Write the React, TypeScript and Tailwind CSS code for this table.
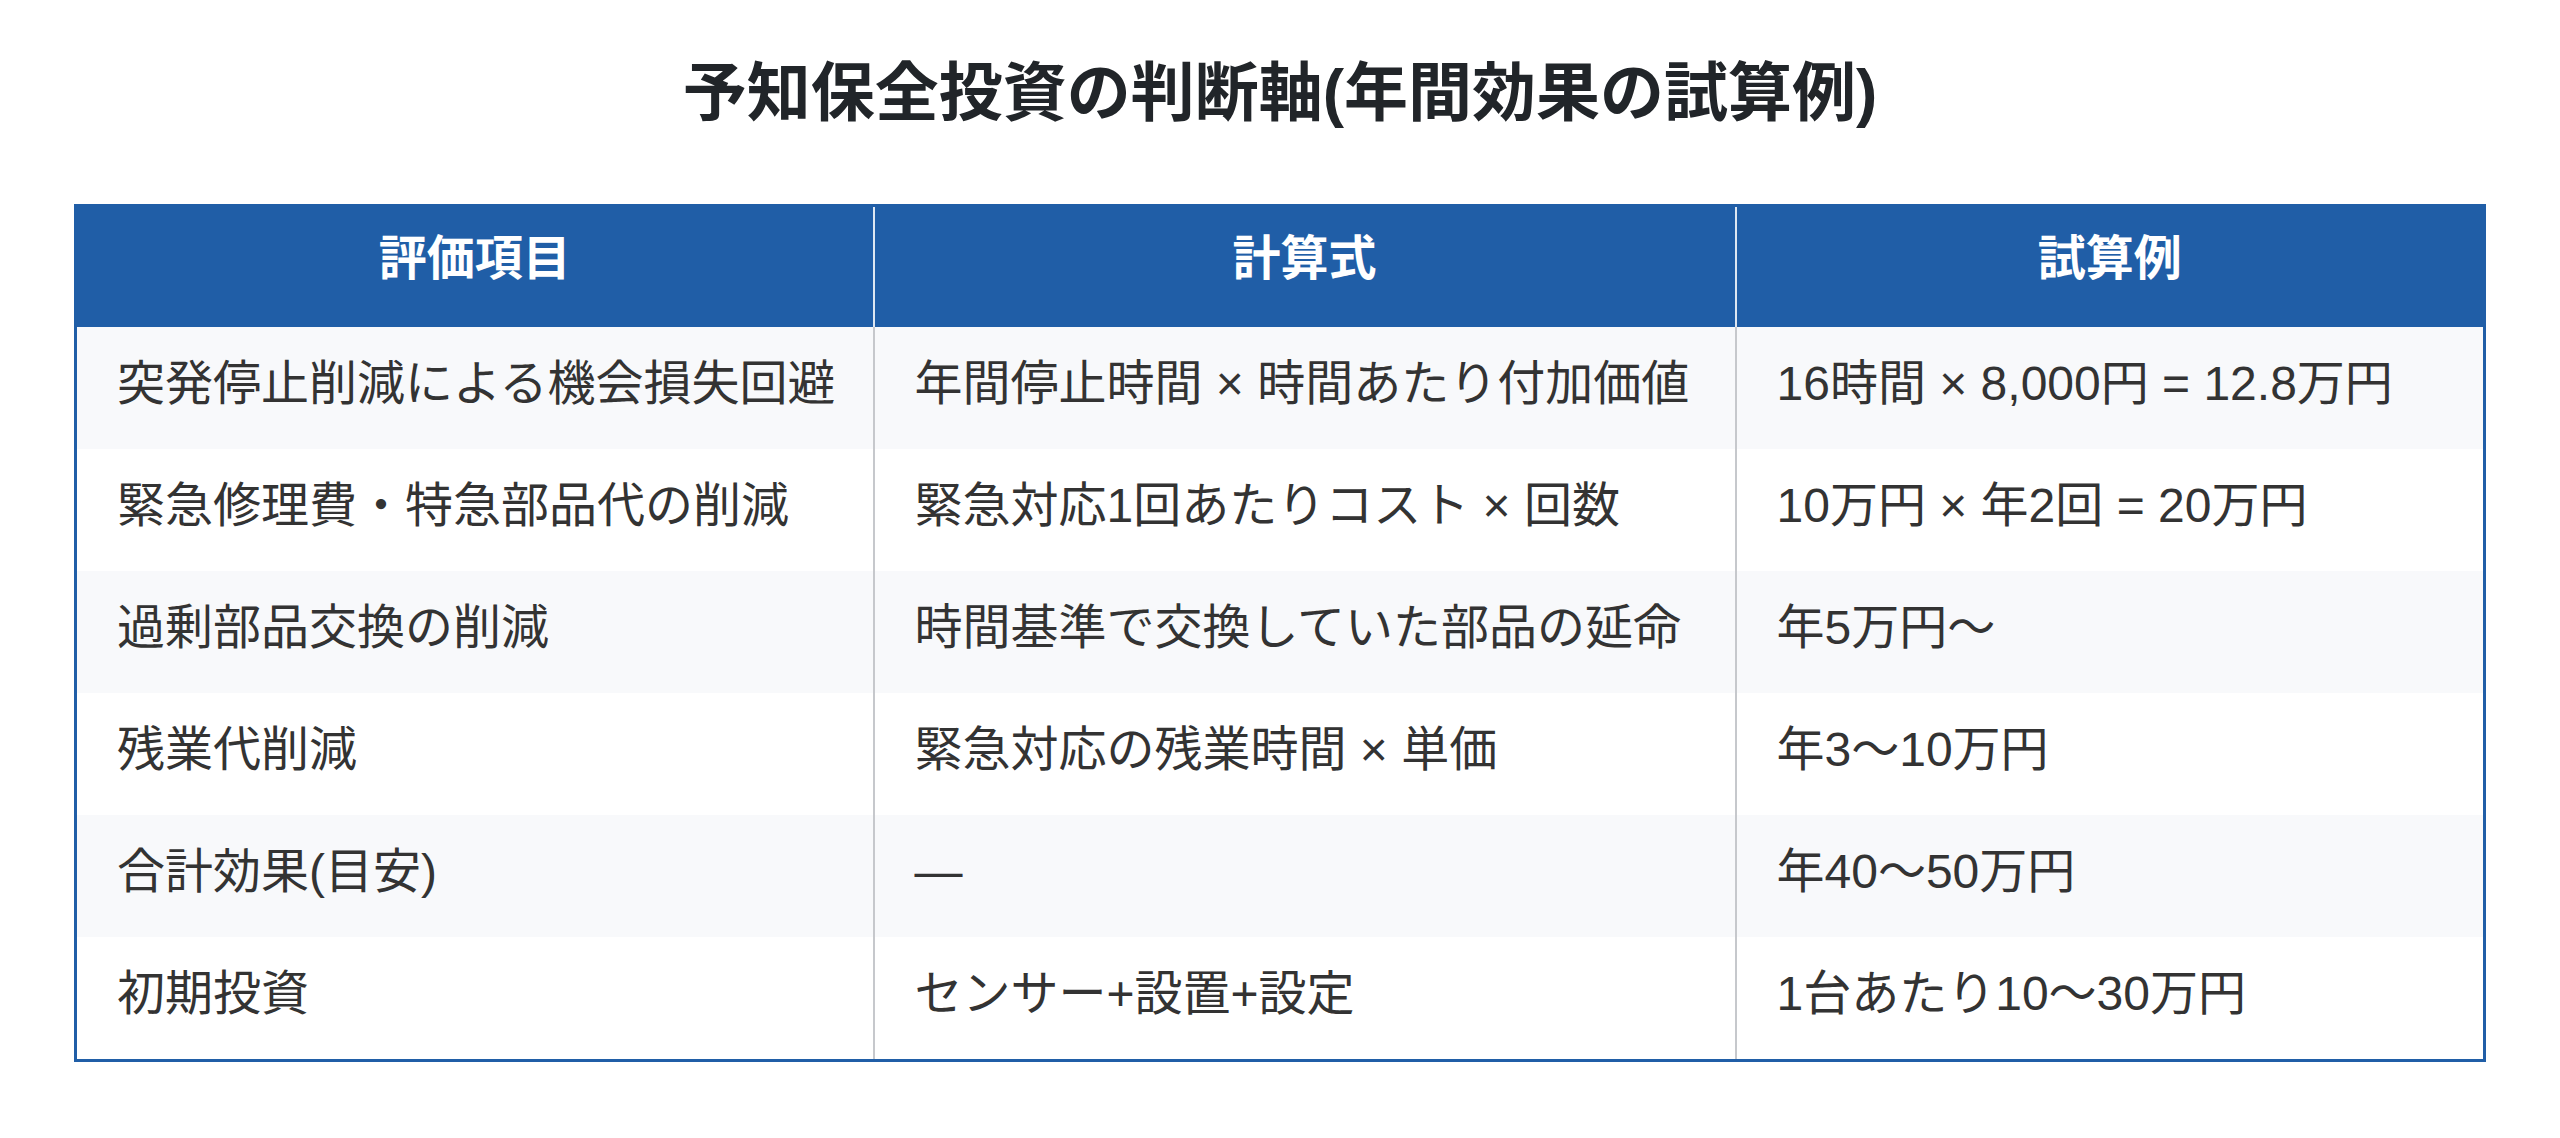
const rows = [
  ["突発停止削減による機会損失回避", "年間停止時間 × 時間あたり付加価値", "16時間 × 8,000円 = 12.8万円"],
  ["緊急修理費・特急部品代の削減", "緊急対応1回あたりコスト × 回数", "10万円 × 年2回 = 20万円"],
  ["過剰部品交換の削減", "時間基準で交換していた部品の延命", "年5万円〜"],
  ["残業代削減", "緊急対応の残業時間 × 単価", "年3〜10万円"],
  ["合計効果(目安)", "—", "年40〜50万円"],
  ["初期投資", "センサー+設置+設定", "1台あたり10〜30万円"],
]

const App = () => {
  return (
    <div className="min-h-screen bg-white px-[74px] pt-[45px] font-['Liberation_Sans','Noto_Sans_CJK_JP',sans-serif]">
      <h1 className="text-center text-[64px] leading-[96px] font-bold text-[#212529] mb-[63px]">
        予知保全投資の判断軸(年間効果の試算例)
      </h1>

      <table className="w-full table-fixed border-collapse border-[3px] border-[#205ea7]">
        <colgroup>
          <col className="w-[798px]" />
          <col className="w-[862px]" />
          <col />
        </colgroup>
        <thead>
          <tr className="bg-[#205ea7] text-white">
            <th className="h-[120px] border-r-2 border-white/85 pt-[16px] pb-[32px] text-[48px] leading-[72px] font-bold">評価項目</th>
            <th className="h-[120px] border-r-2 border-white/85 pt-[16px] pb-[32px] text-[48px] leading-[72px] font-bold">計算式</th>
            <th className="h-[120px] pt-[16px] pb-[32px] text-[48px] leading-[72px] font-bold">試算例</th>
          </tr>
        </thead>
        <tbody>
          {rows.map((row, i) => (
            <tr key={i} className={i % 2 === 0 ? "bg-[#f8f9fb]" : "bg-white"}>
              {row.map((cell, j) => (
                <td
                  key={j}
                  className={
                    j < 2
                      ? "h-[122px] border-r-2 border-[#c6c8cc] px-[40px] pt-[21px] pb-[29px] text-[48px] leading-[72px] text-[#333333] whitespace-nowrap"
                      : "h-[122px] px-[40px] pt-[21px] pb-[29px] text-[48px] leading-[72px] text-[#333333] whitespace-nowrap"
                  }
                >
                  {cell}
                </td>
              ))}
            </tr>
          ))}
        </tbody>
      </table>
    </div>
  )
}

export default App
